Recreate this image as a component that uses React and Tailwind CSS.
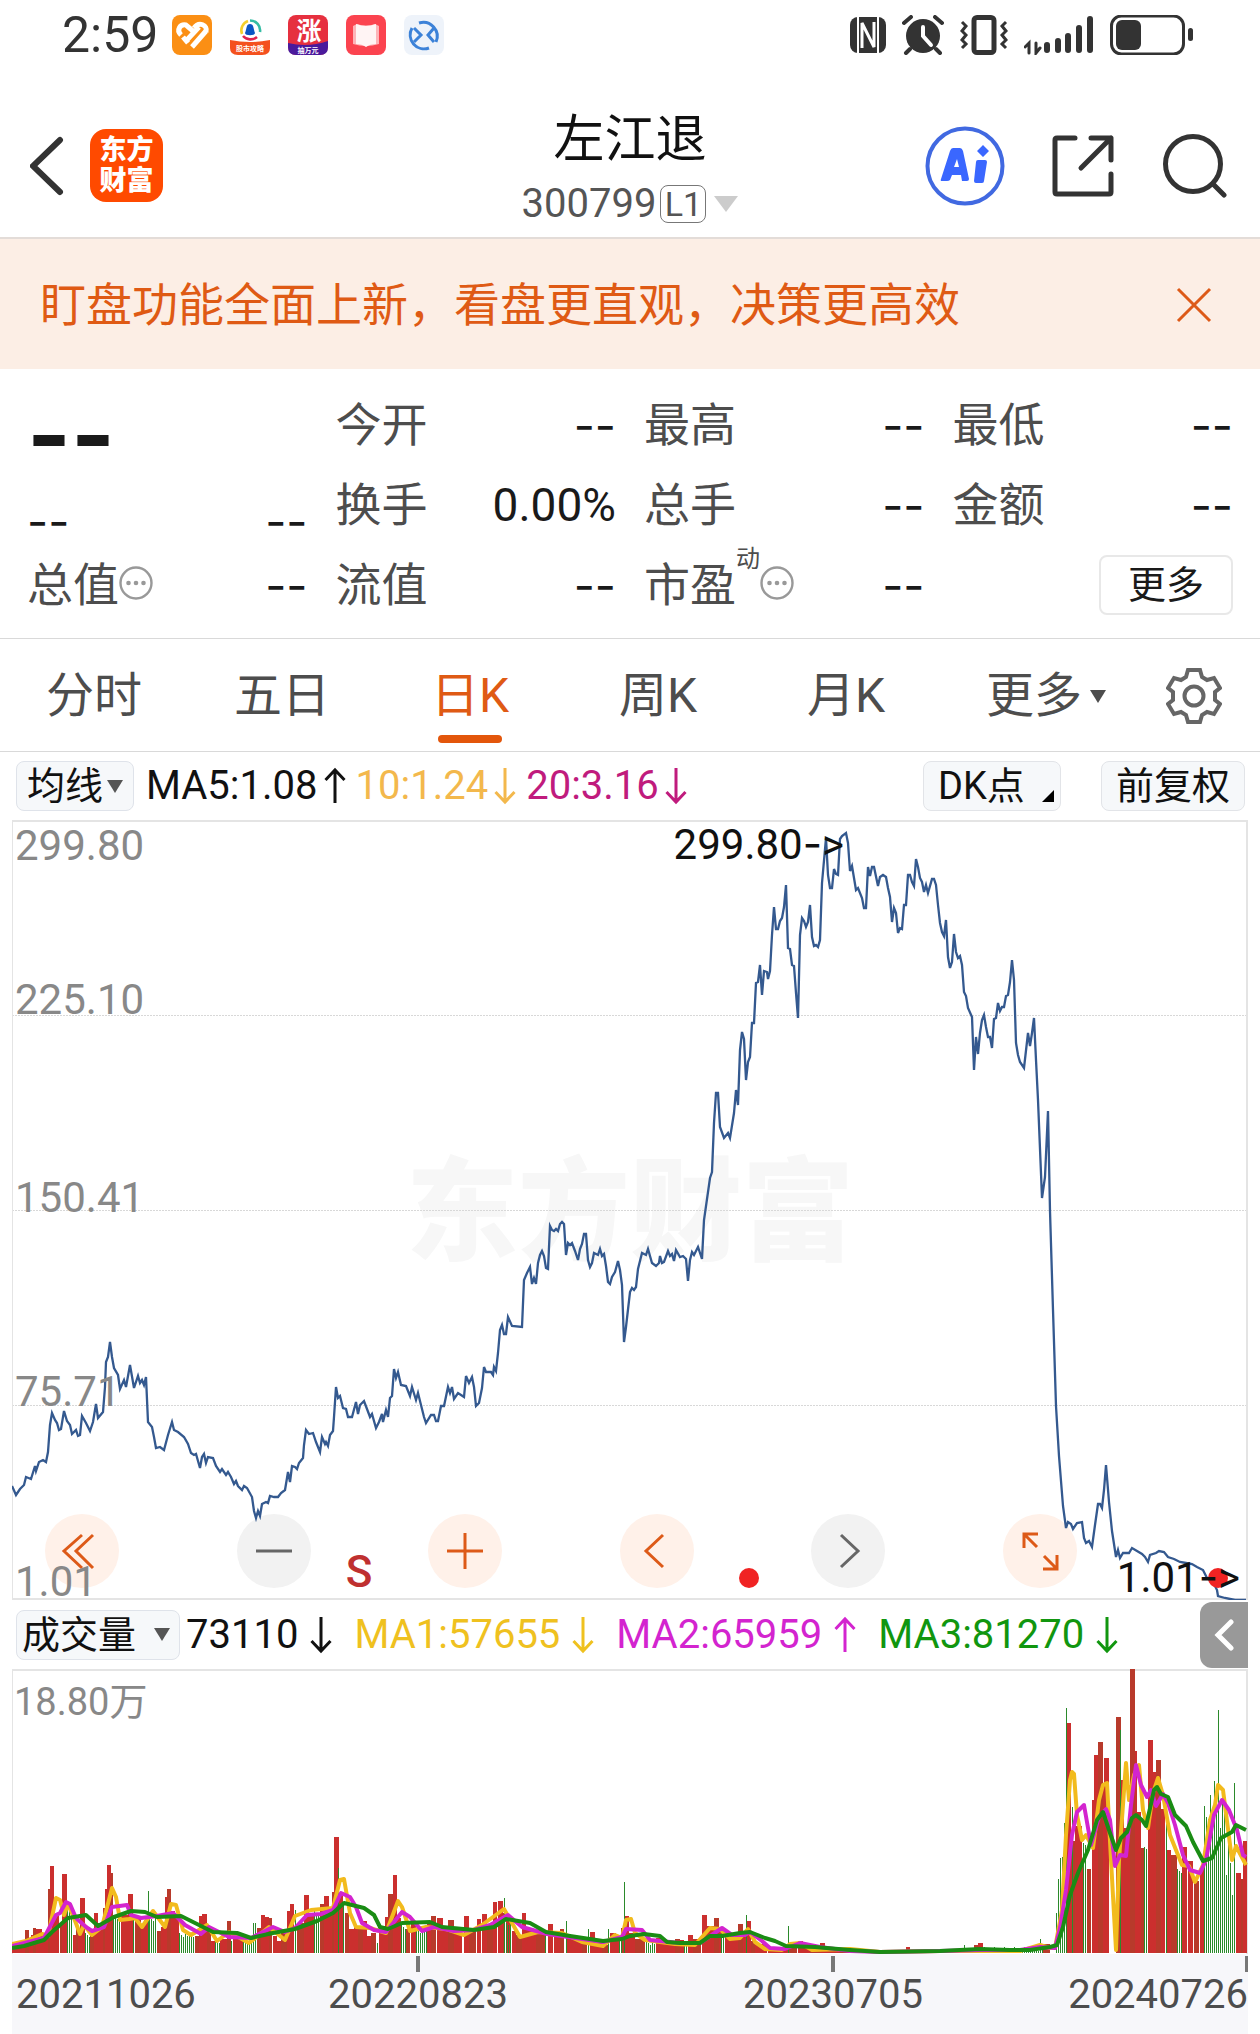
import React, { useState } from "react";

// Closing prices, already scaled to chart coordinates
const pricePoints =
  "12,1486 16,1495 20,1489 24,1485 26,1477 31,1479 35,1466 36,1471 39,1462 43,1460 46,1462 48,1452 50,1425 52,1413 55,1420 57,1423 59,1430 61,1429 64,1411 67,1421 70,1425 72,1434 76,1430 78,1436 80,1435 82,1416 86,1423 90,1431 93,1422 96,1404 98,1418 103,1412 105,1387 106,1362 108,1357 110,1342 112,1357 114,1368 118,1375 120,1389 124,1380 126,1387 130,1365 134,1388 138,1376 140,1383 142,1380 144,1385 146,1377 148,1422 152,1427 154,1437 156,1448 160,1447 164,1450 168,1435 172,1422 174,1430 178,1432 184,1437 188,1444 191,1453 194,1455 196,1454 200,1468 202,1457 204,1454 206,1463 208,1457 213,1458 216,1466 220,1472 222,1469 226,1475 228,1472 231,1477 234,1484 236,1481 238,1486 242,1490 244,1486 247,1488 252,1497 254,1511 256,1518 258,1511 260,1516 262,1504 266,1502 268,1503 270,1496 274,1497 278,1497 281,1493 285,1490 288,1472 290,1482 292,1466 295,1467 297,1469 299,1463 303,1458 304,1445 306,1430 309,1434 313,1433 316,1442 320,1452 322,1437 325,1444 326,1442 328,1446 330,1435 333,1431 334,1417 336,1387 338,1398 340,1396 343,1408 346,1409 348,1417 352,1417 356,1402 358,1414 360,1405 364,1401 367,1409 370,1417 372,1414 376,1428 379,1422 382,1414 383,1422 386,1410 388,1417 390,1398 392,1396 394,1369 396,1378 398,1372 401,1385 406,1386 410,1396 412,1387 416,1400 418,1393 421,1405 424,1417 426,1423 431,1415 434,1415 436,1421 438,1421 441,1406 444,1406 448,1387 450,1393 452,1387 454,1399 458,1393 461,1395 464,1397 466,1376 469,1383 472,1377 474,1387 476,1406 479,1403 482,1388 484,1367 486,1372 491,1372 493,1375 494,1367 496,1371 498,1353 500,1330 502,1325 504,1334 506,1334 508,1317 512,1326 522,1327 524,1280 527,1273 530,1267 532,1284 534,1278 536,1284 538,1263 540,1255 542,1251 544,1256 546,1268 548,1269 550,1226 552,1230 554,1231 556,1229 558,1231 560,1224 562,1222 564,1224 566,1255 568,1243 570,1245 572,1243 575,1251 578,1260 580,1249 582,1244 584,1234 586,1234 588,1260 590,1267 592,1263 594,1253 598,1255 600,1249 602,1256 604,1254 606,1266 608,1282 610,1284 612,1277 615,1272 618,1261 620,1270 622,1285 624,1342 626,1327 630,1292 632,1288 634,1290 636,1287 638,1269 642,1253 646,1255 648,1249 652,1263 656,1266 659,1263 660,1256 662,1263 664,1262 668,1251 670,1256 672,1254 674,1261 676,1250 680,1257 683,1256 686,1259 688,1281 690,1260 692,1252 694,1255 698,1247 702,1259 704,1220 710,1178 712,1172 714,1123 716,1093 718,1093 720,1127 724,1138 728,1133 730,1138 734,1113 736,1090 738,1105 740,1050 742,1032 744,1039 746,1080 748,1062 750,1057 752,1023 754,1023 756,983 758,982 760,965 762,995 764,971 767,972 768,979 770,971 772,935 774,907 776,929 778,929 780,921 782,918 784,907 786,885 788,948 790,949 792,965 794,966 796,993 798,1018 800,935 802,918 804,921 806,927 808,922 810,905 812,937 814,946 816,945 818,947 820,940 822,883 826,838 828,875 830,888 832,888 834,869 836,874 838,875 840,839 842,836 846,833 848,843 850,871 852,866 854,878 856,890 858,888 862,898 864,908 866,908 868,867 870,876 872,867 874,867 878,886 880,877 883,875 886,877 888,888 890,897 892,922 894,908 896,913 898,933 900,928 902,929 904,905 906,905 908,875 910,875 912,882 914,886 916,859 918,867 920,878 922,882 924,892 926,885 928,893 932,879 934,879 936,885 938,905 940,923 942,932 944,936 946,920 948,957 950,968 952,962 954,934 956,952 958,958 960,956 962,965 964,992 966,996 968,1008 972,1017 974,1070 976,1037 978,1054 980,1033 982,1020 984,1015 986,1027 988,1037 990,1037 992,1048 994,1019 996,1018 998,1003 1000,1011 1002,1007 1004,1007 1006,996 1008,995 1010,982 1012,960 1014,980 1016,1043 1018,1055 1020,1062 1024,1068 1028,1033 1030,1046 1032,1033 1034,1018 1036,1060 1038,1100 1042,1198 1045,1177 1048,1111 1050,1211 1053,1310 1056,1406 1059,1456 1063,1506 1066,1528 1068,1522 1071,1524 1073,1529 1077,1523 1082,1522 1084,1538 1086,1543 1089,1541 1092,1547 1095,1525 1098,1504 1100,1504 1102,1508 1104,1490 1106,1465 1109,1502 1112,1531 1116,1557 1118,1550 1120,1558 1123,1553 1129,1553 1132,1548 1137,1551 1142,1554 1145,1557 1148,1562 1150,1555 1156,1553 1159,1551 1164,1552 1168,1557 1174,1559 1180,1562 1186,1563 1192,1564 1197,1567 1203,1570 1207,1578 1213,1582 1217,1590 1218,1596 1225,1598 1235,1600 1246,1600";

// Rising days: x, width, height
const upBars =
  "12,13,9 25,4,23 29,2,12 31,2,18 33,3,25 36,6,24 42,6,18 48,2,64 50,4,87 54,5,38 60,2,30 62,5,79 73,3,18 76,2,30 78,2,20 80,5,55 90,4,22 94,4,40 98,5,30 103,2,45 105,2,64 107,4,88 111,2,80 121,7,38 128,5,59 135,6,35 141,3,28 144,4,33 157,4,22 161,4,26 165,2,56 167,4,64 171,4,42 175,4,35 195,4,17 199,3,37 202,5,39 207,4,27 211,4,12 220,7,14 227,4,32 233,6,20 239,4,16 257,4,25 261,4,38 265,4,36 269,3,35 273,4,17 277,4,12 281,6,20 287,3,42 290,4,49 297,7,30 304,5,58 309,5,40 320,4,49 324,5,57 329,3,40 332,2,61 334,5,116 339,4,60 345,4,40 349,5,24 354,4,27 358,5,25 363,4,32 367,4,17 371,5,20 379,6,24 385,3,36 388,5,59 393,4,78 397,4,35 406,4,24 411,5,32 427,4,30 431,5,37 437,6,35 443,5,25 448,6,33 454,8,24 464,5,37 469,7,24 477,4,34 482,5,39 487,6,28 493,4,51 498,5,52 503,2,40 506,5,35 512,4,22 516,6,18 522,4,40 526,10,24 536,9,20 548,5,29 554,6,18 560,4,24 566,7,18 573,9,15 582,5,12 590,5,21 595,7,14 602,6,8 610,6,20 616,3,15 621,4,25 625,4,37 629,6,20 635,10,14 656,7,15 663,12,11 675,5,14 680,4,13 688,5,18 693,8,14 702,5,38 707,7,27 714,5,35 719,2,23 725,13,17 738,5,29 743,3,17 747,4,32 751,4,12 755,12,9 768,20,4 789,8,10 798,5,12 803,7,8 810,10,5 820,5,10 825,15,5 840,66,2 906,4,6 910,60,2 974,4,8 978,5,10 983,27,4 1042,8,9 1067,4,230 1071,2,113 1073,2,112 1075,7,127 1082,1,90 1087,4,84 1092,2,153 1094,4,198 1098,5,211 1103,1,165 1104,5,195 1116,5,236 1121,3,173 1124,6,125 1130,5,284 1135,2,202 1137,4,141 1141,3,105 1148,5,213 1153,3,181 1156,5,193 1161,4,144 1166,5,103 1171,6,98 1182,5,106 1188,5,92 1194,5,72 1200,5,85 1236,5,80 1241,2,74 1243,4,112"
    .split(" ")
    .map((bar) => bar.split(",").map(Number));

// Stretches of falling days: from, to, height
const downRanges = [
  [67, 73, 45], [85, 90, 20], [113, 121, 38], [133, 134, 38], [149, 157, 36],
  [179, 195, 20], [215, 220, 14], [231, 233, 12], [243, 256, 14], [314, 319, 42],
  [343, 345, 50], [401, 406, 28], [416, 427, 24], [504, 512, 32], [545, 547, 20],
  [619, 622, 14], [646, 655, 12], [684, 687, 10], [721, 725, 20], [984, 1044, 6],
  [1083, 1087, 110], [1144, 1147, 106], [1177, 1182, 84],
];

// Single falling days: x, height
const downBars = [
  [148, 62], [255, 30], [253, 30], [295, 43], [338, 85], [377, 10], [504, 55],
  [566, 32], [588, 24], [608, 24], [624, 71], [746, 38], [788, 27], [964, 8],
  [1040, 14], [1056, 40], [1058, 74], [1060, 95], [1062, 96], [1064, 130],
  [1066, 245], [1072, 146], [1120, 223], [1166, 130], [1204, 147], [1206, 136],
  [1208, 134], [1210, 158], [1212, 128], [1214, 172], [1216, 140], [1218, 243],
  [1220, 125], [1222, 150], [1224, 142], [1226, 78], [1228, 120], [1230, 90],
  [1232, 58], [1234, 170],
];

const volumeLines = [
  {
    color: "#f2bb1d",
    points:
      "12,1944 26,1941 42,1934 48,1936 56,1898 60,1900 64,1915 68,1904 74,1918 80,1934 84,1925 92,1935 102,1927 112,1888 116,1897 120,1920 129,1919 135,1918 142,1927 153,1911 165,1927 171,1904 176,1905 183,1930 191,1935 207,1925 217,1941 229,1932 249,1943 269,1927 285,1940 295,1916 311,1910 333,1908 340,1880 344,1879 350,1913 356,1927 370,1928 386,1933 398,1901 402,1907 410,1931 426,1927 446,1929 464,1935 482,1925 504,1909 520,1937 538,1932 562,1933 582,1942 603,1946 615,1935 622,1938 626,1920 631,1919 635,1933 645,1940 675,1944 695,1945 710,1928 720,1929 730,1939 740,1938 748,1929 755,1942 765,1949 782,1950 790,1944 800,1943 812,1950 850,1949 880,1952 940,1951 1020,1951 1040,1945 1050,1948 1055,1948 1062,1910 1066,1835 1070,1780 1072,1772 1074,1774 1077,1815 1082,1840 1086,1835 1093,1848 1099,1800 1103,1785 1107,1783 1111,1860 1116,1950 1119,1860 1126,1763 1129,1800 1134,1775 1139,1765 1143,1810 1148,1828 1153,1793 1158,1778 1163,1795 1170,1835 1182,1865 1189,1866 1195,1882 1203,1865 1210,1820 1215,1805 1218,1785 1223,1790 1232,1860 1236,1846 1246,1865",
  },
  {
    color: "#d324cf",
    points:
      "12,1946 44,1938 56,1915 60,1913 66,1902 70,1904 76,1918 86,1927 92,1931 104,1927 112,1907 127,1905 131,1915 141,1918 157,1916 173,1913 185,1925 201,1934 209,1927 229,1937 251,1938 273,1927 285,1932 295,1928 307,1915 321,1914 333,1910 341,1893 350,1897 356,1907 362,1923 374,1930 386,1932 402,1912 410,1917 422,1931 434,1927 454,1931 474,1930 490,1925 508,1915 522,1927 547,1934 603,1942 622,1937 626,1929 642,1930 650,1940 680,1943 700,1943 722,1928 732,1935 745,1935 750,1932 762,1941 770,1948 785,1949 800,1943 820,1947 850,1951 880,1952 940,1951 980,1950 1020,1950 1040,1947 1055,1948 1060,1928 1066,1890 1072,1835 1077,1812 1084,1805 1091,1845 1099,1817 1106,1809 1110,1820 1115,1866 1120,1855 1126,1856 1131,1805 1136,1765 1141,1785 1147,1797 1151,1790 1156,1806 1163,1794 1168,1803 1175,1825 1183,1855 1190,1870 1200,1873 1206,1860 1214,1815 1222,1800 1229,1810 1237,1830 1243,1855 1246,1857",
  },
  {
    color: "#1a8c14",
    points:
      "12,1948 24,1946 44,1940 52,1932 68,1918 86,1915 98,1926 114,1917 131,1911 145,1912 157,1917 181,1916 197,1924 213,1932 237,1933 251,1938 273,1933 295,1929 317,1921 333,1913 344,1903 364,1908 374,1915 380,1927 388,1929 402,1923 430,1922 442,1927 474,1930 494,1927 506,1919 530,1923 546,1932 570,1936 603,1941 622,1939 630,1936 644,1934 660,1936 667,1942 680,1943 700,1943 710,1936 722,1936 740,1933 750,1932 765,1938 775,1941 786,1946 815,1947 850,1950 880,1952 940,1951 980,1949 1010,1950 1030,1950 1050,1947 1057,1945 1063,1927 1070,1895 1078,1873 1088,1850 1097,1820 1103,1812 1110,1833 1116,1850 1121,1838 1127,1832 1132,1818 1136,1815 1142,1820 1146,1826 1151,1804 1154,1790 1157,1787 1161,1794 1168,1797 1175,1815 1186,1826 1193,1842 1203,1861 1212,1858 1221,1838 1232,1832 1236,1825 1246,1830",
  },
];

const BASELINE = 1953;

const quoteRows = [
  [
    { label: "今开", value: "--" },
    { label: "最高", value: "--" },
    { label: "最低", value: "--" },
  ],
  [
    { label: "换手", value: "0.00%" },
    { label: "总手", value: "--" },
    { label: "金额", value: "--" },
  ],
];

const tabs = [
  { id: "minute", label: "分时" },
  { id: "five", label: "五日" },
  { id: "day", label: "日K" },
  { id: "week", label: "周K" },
  { id: "month", label: "月K" },
];

const Value = ({ children }) => (
  <dd
    className={
      children === "--"
        ? "font-[Inter] text-[46px] leading-[48px] text-[#1a1a1a]"
        : "text-[46px] leading-[48px] text-[#1a1a1a]"
    }>
    {children}
  </dd>
);

const Quote = ({ label, value, children }) => (
  <div className="flex h-20 items-center justify-between">
    <dt className="flex items-center text-[46px] leading-[48px] text-[#4d4d4d]">
      {label}
      {children}
    </dt>
    <Value>{value}</Value>
  </div>
);

const InfoButton = ({ label }) => (
  <button aria-label={label} className="mb-1">
    <svg className="h-[34px] w-[34px]" viewBox="0 0 34 34" fill="none">
      <circle cx="17" cy="17" r="15.5" stroke="#999" strokeWidth="2.4" />
      <circle cx="9.5" cy="17" r="2.3" fill="#999" />
      <circle cx="17" cy="17" r="2.3" fill="#999" />
      <circle cx="24.5" cy="17" r="2.3" fill="#999" />
    </svg>
  </button>
);

const Triangle = ({ className }) => (
  <svg className={className} viewBox="0 0 16 13" preserveAspectRatio="none">
    <path d="M0 0H16L8 13Z" fill="currentColor" />
  </svg>
);

const Trend = ({ up }) => (
  <svg
    className="h-10 w-[22px]"
    viewBox="0 0 22 40"
    fill="none"
    stroke="currentColor"
    strokeWidth="3">
    {up ? (
      <path d="M11 37V4M1.5 14L11 4L20.5 14" />
    ) : (
      <path d="M11 2V36M1.5 26L11 36L20.5 26" />
    )}
  </svg>
);

const StatusBar = () => (
  <div className="flex h-[94px] items-start justify-between pt-[15px] pr-[66px] pl-[62px]">
    <div className="flex items-center gap-[18px]">
      <span className="-mr-1 text-[50px] leading-10 text-[#333]">2:59</span>
      <svg className="h-10 w-10" viewBox="0 0 40 40">
        <rect width="40" height="40" rx="8" fill="#fb8f14" />
        <path
          d="M9 20C4 15 8 9 14 10L21 16M14 26L27 12M20 32L34 16M11 22L16 28"
          fill="none"
          stroke="#fff"
          strokeWidth="5"
        />
        <path d="M22 13C27 6 36 10 34 17" fill="none" stroke="#fff" strokeWidth="5" />
      </svg>
      <svg className="h-10 w-10" viewBox="0 0 40 40">
        <g fill="none" strokeWidth="2.6">
          <path d="M12 19A10 10 0 0 1 18 6" stroke="#f4cf2c" />
          <path d="M20 5.500A10 10 0 0 1 30 17" stroke="#35bda4" />
          <path d="M13 21A10 10 0 0 0 27 22" stroke="#e0234e" />
        </g>
        <path d="M20 9C24 9 23 13 25 18C25 21 15 21 15 18C17 13 16 9 20 9Z" fill="#0a55c4" />
        <path d="M0 25Q20 29 40 25V33Q40 40 32 40H8Q0 40 0 33Z" fill="#f4511e" />
        <text x="20" y="36" textAnchor="middle" fontSize="7" fontWeight="700" fill="#fff">
          股市攻略
        </text>
      </svg>
      <svg className="h-10 w-10" viewBox="0 0 40 40">
        <rect width="40" height="40" rx="8" fill="#e6303f" />
        <path d="M0 28Q20 33 40 26V32Q40 40 32 40H8Q0 40 0 32Z" fill="#4a1a9c" />
        <text x="21" y="25" textAnchor="middle" fontSize="25" fontWeight="700" fill="#fff">
          涨
        </text>
        <text x="20" y="38" textAnchor="middle" fontSize="7" fontWeight="700" fill="#fff">
          抽万元
        </text>
      </svg>
      <svg className="h-10 w-10" viewBox="0 0 40 40">
        <rect width="40" height="40" rx="8" fill="#fb434f" />
        <path d="M7 11L11 9Q20 12 29 9L33 11V29Q20 33 7 29Z" fill="#fdb4b8" />
        <path d="M10 9Q20 13 30 9V29Q24 29 20 32Q16 29 10 29Z" fill="#fff4f4" />
      </svg>
      <svg className="h-10 w-10" viewBox="0 0 40 40" fill="none">
        <rect width="40" height="40" rx="8" fill="#eef3fa" />
        <g stroke="#3c82d8" strokeWidth="3">
          <path d="M15 8A14 14 0 0 1 32 27M25 33A14 14 0 0 1 8 13" />
          <path d="M10 13L17 20L10 27M30 13L24 20L30 27" />
        </g>
      </svg>
    </div>
    <div className="flex items-center gap-4 text-[#333]">
      <svg className="h-10 w-9" viewBox="0 0 36 40">
        <rect y="2" width="36" height="36" rx="8" fill="currentColor" />
        <path d="M8 2V38M28 2V38" stroke="#fff" strokeWidth="2" />
        <path d="M12 33V8L24 32V7" fill="none" stroke="#fff" strokeWidth="3" />
      </svg>
      <svg className="h-10 w-[42px]" viewBox="0 0 42 40" stroke="currentColor" strokeLinecap="round">
        <circle cx="21" cy="21" r="17" fill="currentColor" stroke="none" />
        <path d="M2 8L9 2M40 8L33 2M8 34L4 38M34 34L38 38" strokeWidth="4" />
        <path d="M21 12V21L29 30" fill="none" stroke="#fff" strokeWidth="4" />
      </svg>
      <svg className="h-10 w-12" viewBox="0 0 48 40" fill="none" stroke="currentColor">
        <rect x="14" y="2.500" width="20" height="35" rx="3" strokeWidth="5" />
        <path
          d="M2 7L6 11L2 16L6 20L2 25L6 29L2 33M46 7L42 11L46 16L42 20L46 25L42 29L46 33"
          strokeWidth="3"
        />
      </svg>
      <svg className="h-10 w-[70px]" viewBox="0 0 70 40" stroke="currentColor" strokeLinecap="round">
        <path d="M23 30V35M34 26V35M44 21V35M55 13V35M66 4V35" strokeWidth="6" />
        <path d="M1 32L5 28V38M12 28V38L16 33" fill="none" strokeWidth="3" />
      </svg>
      <svg className="h-10 w-[84px]" viewBox="0 0 84 40">
        <rect x="1.500" y="1" width="72" height="38" rx="10" fill="none" stroke="currentColor" strokeWidth="3" />
        <rect x="6" y="5" width="25" height="30" rx="6" fill="currentColor" />
        <rect x="78" y="13" width="5" height="13" rx="2.500" fill="currentColor" />
      </svg>
    </div>
  </div>
);

const Header = () => (
  <header className="grid h-[145px] grid-cols-[1fr_auto_1fr] items-center border-b-2 border-[#e3dcd8] px-[30px]">
    <div className="flex items-center gap-[26px]">
      <button aria-label="返回">
        <svg
          className="h-[60px] w-[34px]"
          viewBox="0 0 34 60"
          fill="none"
          stroke="#333"
          strokeWidth="6"
          strokeLinecap="round">
          <path d="M30 4L3 30L30 56" />
        </svg>
      </button>
      <a
        href="#home"
        className="flex h-[73px] w-[73px] flex-col items-center justify-center rounded-2xl bg-[#ff4a00] text-[27px] leading-[31px] font-black text-white">
        <span>东方</span>
        <span>财富</span>
      </a>
    </div>
    <div className="flex flex-col items-center pt-2">
      <h1 className="text-[51px] leading-[68px] text-[#111]">左江退</h1>
      <button className="flex items-center text-[40px] leading-[60px] text-[#555]">
        300799
        <span className="ml-1 flex h-[38px] w-[46px] items-center justify-center rounded-lg border border-[#777] text-[34px]">
          L1
        </span>
        <Triangle className="ml-2 h-4 w-6 text-[#ccc]" />
      </button>
    </div>
    <div className="flex items-center justify-end gap-[47px] pr-[3px]">
      <button aria-label="AI">
        <svg className="h-20 w-20" viewBox="0 0 80 80">
          <circle cx="40" cy="40" r="37.500" fill="none" stroke="#4169e1" strokeWidth="4" />
          <path
            d="M28 22H35Q37 22 38 25L44 53Q44 55 42 55H37L36 49H27L25 54Q24 55 22 55H17Q15 55 16 53L25 25Q26 22 28 22ZM32 33L29 41H34Z"
            fill="#3a67ff"
            fillRule="evenodd"
          />
          <path
            d="M53 34H60Q62 34 62 36L59 55Q59 57 57 57H51Q49 57 49 55L51 36Q51 34 53 34ZM58 19L64 25L58 31L52 25Z"
            fill="#3a67ff"
          />
        </svg>
      </button>
      <button aria-label="分享">
        <svg
          className="h-16 w-16"
          viewBox="0 0 64 64"
          fill="none"
          stroke="#333"
          strokeWidth="5"
          strokeLinecap="round"
          strokeLinejoin="round">
          <path d="M23 4H5Q3 4 3 6V58Q3 60 5 60H57Q59 60 59 58V40M39 4H59V26M59 4L29 34" />
        </svg>
      </button>
      <button aria-label="搜索">
        <svg
          className="h-16 w-16"
          viewBox="0 0 64 64"
          fill="none"
          stroke="#333"
          strokeWidth="5"
          strokeLinecap="round">
          <circle cx="30" cy="30" r="27.500" />
          <path d="M50 50L61 61" />
        </svg>
      </button>
    </div>
  </header>
);

const Controls = () => {
  const items = [
    { label: "最早", warm: true, path: "M37 21L19 37L37 54M48 21L31 37L48 54" },
    { label: "缩小", warm: false, path: "M19 37H55" },
    { label: "放大", warm: true, path: "M19 37H55M37 19V55" },
    { label: "左移", warm: true, path: "M43 21L26 37L43 53" },
    { label: "右移", warm: false, path: "M30 21L47 37L30 53" },
    { label: "全屏", warm: true, path: "M35 20H21V34M21 20L34 33M40 55H54V41M54 55L41 42" },
  ];

  return (
    <div className="absolute right-[171px] bottom-3 left-[33px] flex justify-between">
      {items.map((item) => (
        <button
          key={item.label}
          aria-label={item.label}
          className={`h-[74px] w-[74px] rounded-full ${
            item.warm ? "bg-[#fff1e9] text-[#dd5a18]" : "bg-[#f2f2f2] text-[#666]"
          }`}>
          <svg viewBox="0 0 74 74" fill="none" stroke="currentColor" strokeWidth="3">
            <path d={item.path} />
          </svg>
        </button>
      ))}
    </div>
  );
};

const PriceMark = ({ value, className }) => (
  <span className={`absolute text-[42px] leading-10 text-[#111] ${className}`}>
    {value}
    <span className="font-[Inter]">-</span>&gt;
  </span>
);

const PriceChart = () => (
  <section className="relative mx-3 h-[780px]">
    <div className="absolute inset-0 flex items-center justify-center pt-2 text-[112px] leading-none font-black text-[#f7f7f7]">
      东方财富
    </div>
    <Controls />
    <svg
      className="pointer-events-none absolute inset-0 h-full w-full"
      viewBox="12 820 1236 780"
      preserveAspectRatio="none"
      fill="none">
      <path d="M12 1015.500H1247M12 1210.500H1247M12 1405.500H1247" stroke="#d8d8d8" strokeDasharray="2 1" />
      <path d="M12.500 820V1600" stroke="#e4e4e4" />
      <path d="M12 821H1247V1599H12" stroke="#e4e4e4" strokeWidth="2" />
      <polyline points={pricePoints} stroke="#34598f" strokeWidth="2.300" />
      <circle cx="749" cy="1578" r="10" fill="#f02323" />
      <circle cx="1218" cy="1578" r="10" fill="#f02323" />
    </svg>
    <div className="pointer-events-none absolute inset-0 grid grid-rows-4 pt-1 pl-[3px] text-[42px] leading-9 text-[#888]">
      <div className="flex flex-col justify-between pt-1">
        <span>299.80</span>
        <span>225.10</span>
      </div>
      <span className="-mb-1 self-end">150.41</span>
      <span className="-mb-1 self-end">75.71</span>
      <span className="self-end">1.01</span>
    </div>
    <PriceMark value="299.80" className="top-1 right-[404px]" />
    <PriceMark value="1.01" className="right-2 bottom-[2px]" />
    <span className="absolute bottom-2 left-[27%] text-[44px] leading-10 font-medium text-[#bf3030]">S</span>
  </section>
);

const VolumeChart = () => (
  <section className="relative mx-3 h-[285px]">
    <svg
      className="absolute inset-0 h-full w-full"
      viewBox="12 1669 1236 285"
      preserveAspectRatio="none"
      fill="none">
      <path d="M12.500 1669V1954" stroke="#e4e4e4" />
      <path d="M12 1670H1247V1954" stroke="#e4e4e4" strokeWidth="2" />
      {upBars.map(([x, width, height], index) => (
        <rect
          key={x}
          x={x}
          y={BASELINE - height}
          width={width}
          height={height}
          fill={index % 3 === 1 ? "#b83a2b" : "#cb2f2e"}
        />
      ))}
      <g fill="#2b8a2b">
        {downRanges.map(([from, to, height]) =>
          Array.from({ length: Math.ceil((to - from) / 2) }, (_, i) => {
            const h = height - ((i * 7) % 5);
            return <rect key={from + i} x={from + i * 2} y={BASELINE - h} width="1" height={h} />;
          })
        )}
        {downBars.map(([x, height]) => (
          <rect key={`${x}-${height}`} x={x} y={BASELINE - height} width="1" height={height} />
        ))}
      </g>
      {volumeLines.map((line) => (
        <polyline
          key={line.color}
          points={line.points}
          stroke={line.color}
          strokeWidth="4"
          strokeLinejoin="round"
        />
      ))}
    </svg>
    <span className="absolute top-[10px] left-[2px] text-[38px] leading-[46px] text-[#888]">18.80万</span>
  </section>
);

const App = () => {
  const [activeTab, setActiveTab] = useState("day");
  const [showNotice, setShowNotice] = useState(true);

  return (
    <div className="flex min-h-screen flex-col bg-white font-[Roboto,'Noto_Sans_CJK_SC',sans-serif]">
      <StatusBar />
      <Header />

      {showNotice && (
        <div className="flex h-[130px] items-center justify-between bg-[#fceee5] pt-[2px] pr-[48px] pl-[40px]">
          <p className="text-[46px] leading-[60px] text-[#df5a14]">
            盯盘功能全面上新，看盘更直观，决策更高效
          </p>
          <button aria-label="关闭" onClick={() => setShowNotice(false)}>
            <svg className="h-9 w-9" viewBox="0 0 36 36" stroke="#dd5a18" strokeWidth="3">
              <path d="M2 2L34 34M34 2L2 34" />
            </svg>
          </button>
        </div>
      )}

      {/* Quote figures */}
      <dl className="grid h-[270px] grid-cols-4 content-start gap-x-7 border-b border-[#d9d9d9] px-[27px] pt-4">
        <div className="flex h-20 items-end">
          <dd className="font-[Inter] text-[94px] leading-[60px] font-bold text-[#1a1a1a]">--</dd>
        </div>
        {quoteRows[0].map((item) => (
          <Quote key={item.label} {...item} />
        ))}
        <div className="flex h-20 items-end justify-between">
          <Value>--</Value>
          <Value>--</Value>
        </div>
        {quoteRows[1].map((item) => (
          <Quote key={item.label} {...item} />
        ))}
        <Quote label="总值" value="--">
          <InfoButton label="总值说明" />
        </Quote>
        <Quote label="流值" value="--" />
        <Quote label="市盈" value="--">
          <sup className="self-start text-[24px] leading-5">动</sup>
          <InfoButton label="市盈说明" />
        </Quote>
        <div className="flex h-20 items-center justify-end">
          <button className="h-[60px] w-[134px] rounded-lg border-2 border-[#e8e8e8] text-[38px] leading-[52px] text-[#1a1a1a]">
            更多
          </button>
        </div>
      </dl>

      {/* Period tabs */}
      <nav className="flex h-[113px] border-b border-[#d9d9d9] pt-[2px] text-[48px] leading-[60px] text-[#4d4d4d]">
        {tabs.map((tab) => {
          const isActive = activeTab === tab.id;

          return (
            <button
              key={tab.id}
              onClick={() => setActiveTab(tab.id)}
              className={`relative flex-1 ${isActive ? "text-[#df5a14]" : ""}`}>
              {tab.label}
              {isActive && (
                <span className="absolute bottom-2 left-1/2 h-2 w-16 -translate-x-1/2 rounded-full bg-[#e3560b]" />
              )}
            </button>
          );
        })}
        <button className="flex-1">
          <span className="flex items-center justify-center gap-2 pl-6">
            更多
            <Triangle className="h-[13px] w-4" />
          </span>
        </button>
        <button aria-label="设置" className="flex w-[132px] items-center justify-center">
          <svg className="h-14 w-14" viewBox="-28 -28 56 56" fill="none" stroke="#666" strokeWidth="4">
            <path d="M-6-26H6L8-19L13-16L20-18L26-8L21-4V4L26 8L20 18L13 16L8 19L6 26H-6L-8 19L-13 16L-20 18L-26 8L-21 4V-4L-26-8L-20-18L-13-16L-8-19Z" />
            <circle r="9.500" />
          </svg>
        </button>
      </nav>

      {/* Moving averages */}
      <div className="flex h-[68px] items-center justify-between pr-[15px] pl-4 text-[40px] leading-[46px] text-[#111]">
        <div className="flex items-center">
          <button className="flex h-[50px] w-[118px] items-center justify-center rounded-lg border border-[#dfe3ea] bg-[#f6f8fa] text-[38px]">
            均线
            <Triangle className="ml-1 h-[13px] w-4 text-[#555]" />
          </button>
          <span className="ml-3 flex items-center gap-[6px]">
            MA5:1.08
            <Trend up />
          </span>
          <span className="ml-[10px] flex items-center gap-[6px] text-[#f3b84c]">
            10:1.24
            <Trend />
          </span>
          <span className="ml-[10px] flex items-center gap-[6px] text-[#c01b7d]">
            20:3.16
            <Trend />
          </span>
        </div>
        <div className="flex gap-10">
          <button className="flex h-[50px] w-[138px] items-center justify-between rounded-lg border border-[#e2e4e8] bg-[#f6f8fa] pr-[6px] pl-[14px] text-[38px]">
            DK点
            <svg className="mb-2 h-3 w-3 self-end" viewBox="0 0 12 12">
              <path d="M12 0V12H0Z" />
            </svg>
          </button>
          <button className="h-[50px] w-[144px] rounded-lg border border-[#e2e4e8] bg-[#f6f8fa] text-[38px]">
            前复权
          </button>
        </div>
      </div>

      <PriceChart />

      {/* Volume legend */}
      <div className="flex h-[69px] items-center pr-3 pl-4 text-[40px] leading-[46px] text-[#111]">
        <button className="flex h-[50px] w-[164px] items-center justify-between rounded-lg border border-[#dfe3ea] bg-[#f6f8fa] pr-[9px] pl-[5px] text-[38px]">
          成交量
          <Triangle className="h-[13px] w-4 text-[#555]" />
        </button>
        <span className="ml-[6px] flex items-center gap-3">
          73110
          <Trend />
        </span>
        <span className="ml-[22px] flex items-center gap-3 text-[#efc11f]">
          MA1:57655
          <Trend />
        </span>
        <span className="ml-[22px] flex items-center gap-3 text-[#d324cf]">
          MA2:65959
          <Trend up />
        </span>
        <span className="ml-[22px] flex items-center gap-3 text-[#11960f]">
          MA3:81270
          <Trend />
        </span>
        <button
          aria-label="展开"
          className="ml-auto flex h-[66px] w-12 items-center justify-center rounded-l-xl bg-[#999]">
          <svg className="h-8 w-5" viewBox="0 0 20 32" fill="none" stroke="#fff" strokeWidth="5" strokeLinecap="round">
            <path d="M17 3L4 16L17 29" />
          </svg>
        </button>
      </div>

      <VolumeChart />

      {/* Date axis */}
      <footer className="mx-3 grid min-h-20 flex-1 grid-cols-[199fr_414fr_416fr_207fr] bg-[#f7f7fa] text-[40px] leading-[46px] text-[#4d4d4d]">
        <time className="pt-[18px] pl-1">20211026</time>
        <time className="flex flex-col items-center">
          <span className="mt-[2px] h-4 w-1 bg-[#777]" />
          20220823
        </time>
        <time className="flex flex-col items-center">
          <span className="mt-[2px] h-4 w-1 bg-[#777]" />
          20230705
        </time>
        <time className="flex flex-col items-end">
          <span className="mt-[2px] h-4 w-[3px] bg-[#777]" />
          20240726
        </time>
      </footer>
    </div>
  );
};

export default App;
